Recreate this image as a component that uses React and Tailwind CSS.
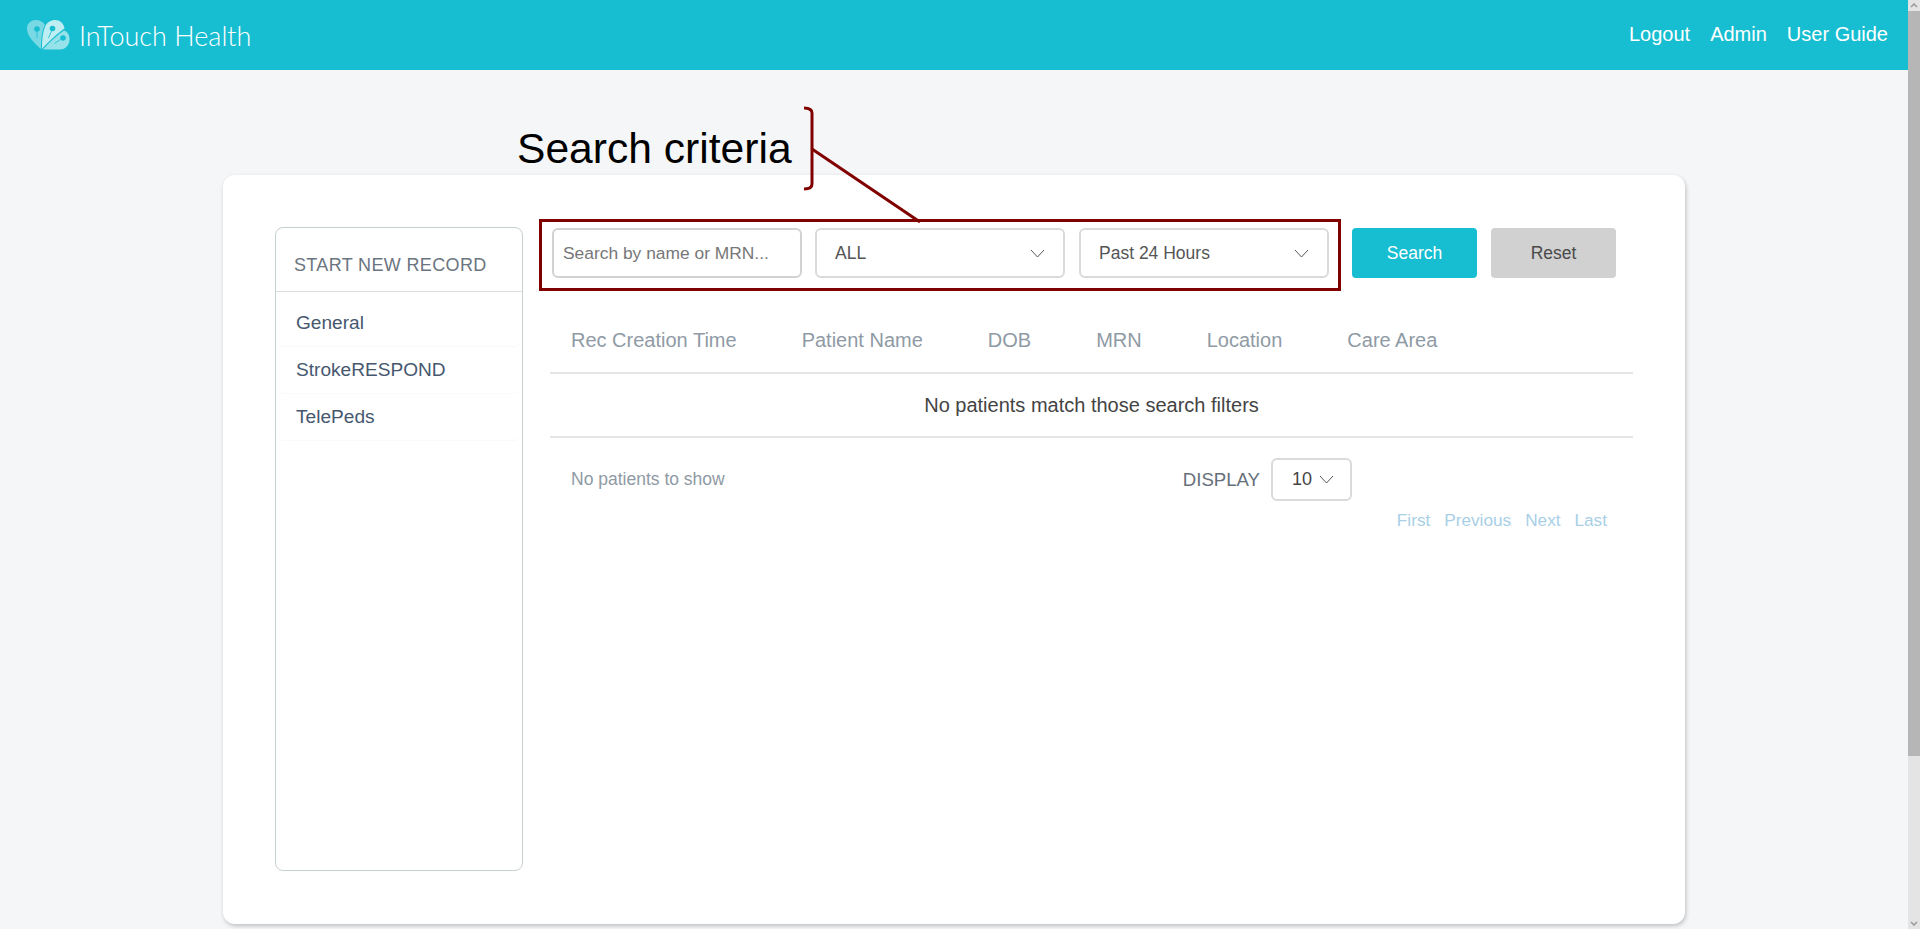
import React from 'react';

const COLUMNS = ['Rec Creation Time', 'Patient Name', 'DOB', 'MRN', 'Location', 'Care Area'];
const RECORD_TYPES = ['General', 'StrokeRESPOND', 'TelePeds'];
const PAGER = ['First', 'Previous', 'Next', 'Last'];

const Chevron = ({ className = '' }) => (
    <svg className={className} width="15" height="9" viewBox="0 0 15 9" fill="none" stroke="#555" strokeWidth="1">
        <path d="M1 1l6.5 7L14 1" />
    </svg>
);

const Logo = () => (
    <svg width="44" height="32" viewBox="0 0 44 32" className="shrink-0">
        {/* back petal */}
        <path d="M15 30C8 24 1 17 1 9.500C1 4 5.500 1 10 1c4 0 7.500 2 9 5C16 11 15 20 15 30z" fill="#fff" fillOpacity="0.42" />
        {/* middle petal */}
        <path d="M16 30c0-9 0.500-16 3-22C21 3 25 1 29 1c5 0 8.500 3 9.500 8.500C32 14 23 22 16 30z" fill="#fff" fillOpacity="0.72" />
        {/* front petal */}
        <path d="M17 30.500c6-7 14-14 21-19 3 1 5.500 4 5.500 8.500 0 6-4 10.500-9.500 10.500z" fill="#fff" fillOpacity="0.55" />
        <circle cx="11" cy="10" r="2.800" fill="#17bed1" />
        <path d="M11 12v7" stroke="#17bed1" strokeWidth="0.800" />
        <circle cx="26.500" cy="9.500" r="2.800" fill="#17bed1" />
        <path d="M25.500 12l-3 7" stroke="#17bed1" strokeWidth="0.800" />
        <circle cx="37" cy="19" r="2.800" fill="#17bed1" />
        <path d="M34.500 20.500l-6 4" stroke="#17bed1" strokeWidth="0.800" />
    </svg>
);

const Header = () => (
    <header className="h-[70px] bg-[#17bed1] flex items-center justify-between pl-[26px] pr-[20px] text-white">
        <div className="flex items-center gap-[9px]">
            <Logo />
            <span className="text-[27px] leading-none font-light font-['Lato',sans-serif]">InTouch Health</span>
        </div>
        <nav className="flex gap-[20px] text-[20px] leading-none mb-[2px]">
            <a>Logout</a>
            <a>Admin</a>
            <a>User Guide</a>
        </nav>
    </header>
);

const Sidebar = () => (
    <aside className="w-[248px] h-[644px] shrink-0 rounded-lg border border-[#c8cfcf]">
        <div className="h-[64px] border-b border-[#dcdfe1] pl-[18px] pt-[26px] text-[18px] leading-[22px] tracking-[0.350px] text-[#6b7580]">
            START NEW RECORD
        </div>
        <ul className="pt-[8px]">
            {RECORD_TYPES.map((type) => (
                <li
                    key={type}
                    className="h-[47px] flex items-center pl-[20px] text-[19.100px] text-[#46586f] border-b border-[#fafafa] rounded-lg"
                >
                    {type}
                </li>
            ))}
        </ul>
    </aside>
);

const SelectBox = ({ label }) => (
    <div className="w-[250px] h-[50px] flex items-center justify-between pl-[18px] pr-[18px] rounded-md border-2 border-[#dadada] text-[17.500px] text-[#555]">
        <span>{label}</span>
        <Chevron />
    </div>
);

const Filters = () => (
    <div className="relative flex items-center h-[50px] mt-[1px] ml-[2px] text-[18px]">
        <div className="w-[250px] h-[50px] flex items-center pl-[9px] rounded-md border-2 border-[#d2d2d2] text-[17.400px] text-[#777]">
            Search by name or MRN...
        </div>
        <div className="ml-[13px] flex gap-[14px]">
            <SelectBox label="ALL" />
            <SelectBox label="Past 24 Hours" />
        </div>
        <button className="ml-[23px] w-[125px] h-[50px] rounded bg-[#17bed1] text-white text-[17.500px]">Search</button>
        <button className="ml-[14px] w-[125px] h-[50px] rounded bg-[#d1d1d1] text-[#4a4a4a] text-[17.500px]">Reset</button>
        {/* red annotation frame around the filter inputs */}
        <div className="absolute left-[-13px] top-[-9px] w-[802px] h-[72px] border-[3px] border-[#800000] pointer-events-none" />
    </div>
);

const ResultsTable = () => (
    <div className="mt-[42px]">
        <div className="h-[54px] flex gap-[65px] pl-[21px] border-b-2 border-[#e4e5e5] text-[20px] leading-[40px] text-[#8f9aa5]">
            {COLUMNS.map((col) => (
                <span key={col}>{col}</span>
            ))}
        </div>
        <div className="h-[64px] flex items-center justify-center border-b-2 border-[#e4e5e5] text-[20px] text-[#444]">
            No patients match those search filters
        </div>
    </div>
);

const Footer = () => (
    <div className="relative">
        <div className="flex items-center h-[43px] mt-[20px] pl-[21px]">
            <span className="text-[17.500px] text-[#8f9aa5]">No patients to show</span>
            <div className="ml-auto mr-[281px] flex items-center">
                <span className="text-[18.600px] text-[#66707a]">DISPLAY</span>
                <div className="ml-[11px] w-[81px] h-[43px] flex items-center pl-[19px] gap-[7px] rounded-md border-2 border-[#dadada] text-[18px] text-[#444]">
                    10
                    <Chevron />
                </div>
            </div>
        </div>
        <div className="flex justify-end gap-[14px] pr-[26px] mt-[8px] text-[17.200px] leading-[22px] text-[#a8cfe6]">
            {PAGER.map((item) => (
                <a key={item}>{item}</a>
            ))}
        </div>
    </div>
);

const Scrollbar = () => (
    <div className="w-[12px] shrink-0 flex flex-col bg-[#e4e4e4]">
        <div className="h-[11px] flex items-center justify-center">
            <svg width="8" height="5" viewBox="0 0 8 5" fill="none" stroke="#9a9a9a" strokeWidth="1.500">
                <path d="M1 4l3-3 3 3" />
            </svg>
        </div>
        <div className="h-[745px] bg-[#b6b6b6]" />
        <div className="flex-1 flex items-end justify-center pb-[3px]">
            <svg width="8" height="5" viewBox="0 0 8 5" fill="none" stroke="#9a9a9a" strokeWidth="1.500">
                <path d="M1 1l3 3 3-3" />
            </svg>
        </div>
    </div>
);

export default function App() {
    return (
        <div className="h-[929px] flex overflow-hidden bg-[#f5f6f8] font-['Liberation_Sans',Arial,sans-serif]">
            <div className="relative flex-1 min-w-0">
                <Header />
                <main className="pt-[105px] pl-[223px]">
                    <section className="w-[1462px] h-[749px] rounded-xl bg-white shadow-[1px_2px_4px_rgba(0,0,0,0.22)] flex pl-[52px] pt-[52px]">
                        <Sidebar />
                        <div className="ml-[27px] w-[1083px]">
                            <Filters />
                            <ResultsTable />
                            <Footer />
                        </div>
                    </section>
                </main>

                {/* callout over the page */}
                <span className="absolute left-[517px] top-[124px] text-[42.600px] leading-[48px] text-black">Search criteria</span>
                <svg className="absolute left-[800px] top-[100px] pointer-events-none" width="130" height="130" viewBox="0 0 130 130" fill="none" stroke="#800000" strokeWidth="3">
                    <path d="M4 8c5 0 8 1 8 5v71c0 4-3 5-8 5" />
                    <path d="M12 49l108 73" />
                </svg>
            </div>
            <Scrollbar />
        </div>
    );
}
